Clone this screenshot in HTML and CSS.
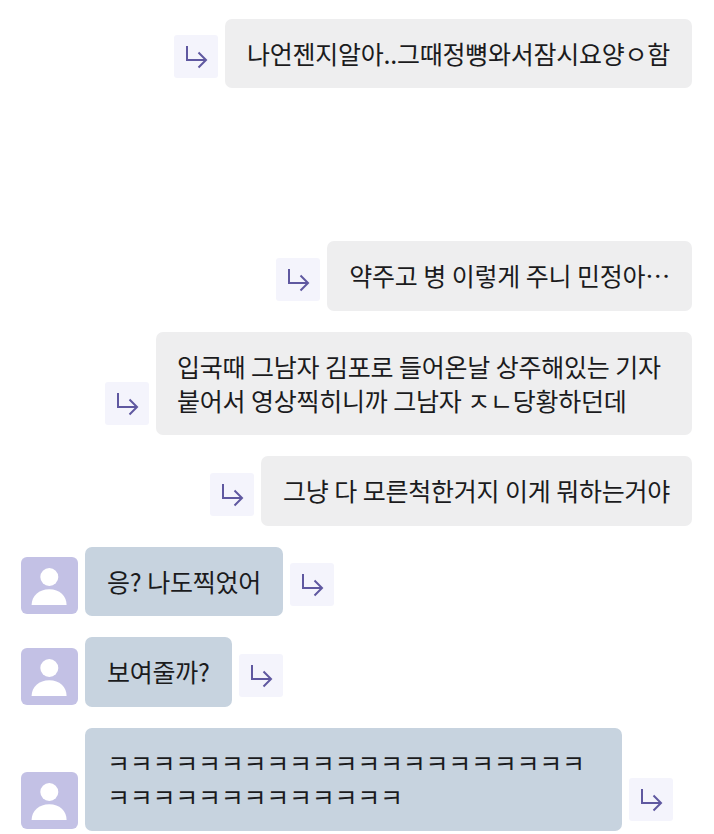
FILE: index.html
```html
<!DOCTYPE html>
<html lang="ko">
<head>
    <meta charset="UTF-8">
    <meta name="viewport" content="width=device-width, initial-scale=1.0">
    <title>Chat</title>
    <link rel="stylesheet" href="styles.css">
</head>
<body>
    <svg class="defs" width="0" height="0">
        <symbol id="reply" viewBox="0 0 44 43">
            <path d="M13 11V25H32M24.500 17.500L32 25L24.500 32.500" fill="none" stroke="currentColor" stroke-width="2"/>
        </symbol>
        <symbol id="person" viewBox="0 0 57 57">
            <circle cx="28.300" cy="20" r="9"/>
            <path d="M10.600 48C10.600 39 18 32.300 28.300 32.300S45.600 39 45.600 48Z"/>
        </symbol>
    </svg>

    <div class="chat">
        <div class="row mine first">
            <span class="reply"><svg><use href="#reply"/></svg></span>
            <div class="bubble">나언젠지알아..그때정뼝와서잠시요양ㅇ함</div>
        </div>
        <div class="row mine gap-big">
            <span class="reply"><svg><use href="#reply"/></svg></span>
            <div class="bubble">약주고 병 이렇게 주니 민정아…</div>
        </div>
        <div class="row mine">
            <span class="reply"><svg><use href="#reply"/></svg></span>
            <div class="bubble wide-a">입국때 그남자 김포로 들어온날 상주해있는 기자<br>붙어서 영상찍히니까 그남자 ㅈㄴ당황하던데</div>
        </div>
        <div class="row mine">
            <span class="reply"><svg><use href="#reply"/></svg></span>
            <div class="bubble">그냥 다 모른척한거지 이게 뭐하는거야</div>
        </div>
        <div class="row theirs">
            <span class="avatar"><svg><use href="#person"/></svg></span>
            <div class="bubble">응? 나도찍었어</div>
            <span class="reply"><svg><use href="#reply"/></svg></span>
        </div>
        <div class="row theirs">
            <span class="avatar"><svg><use href="#person"/></svg></span>
            <div class="bubble">보여줄까?</div>
            <span class="reply"><svg><use href="#reply"/></svg></span>
        </div>
        <div class="row theirs">
            <span class="avatar"><svg><use href="#person"/></svg></span>
            <div class="bubble wide-b">ㅋㅋㅋㅋㅋㅋㅋㅋㅋㅋㅋㅋㅋㅋㅋㅋㅋㅋㅋㅋㅋ<br>ㅋㅋㅋㅋㅋㅋㅋㅋㅋㅋㅋㅋㅋ</div>
            <span class="reply"><svg><use href="#reply"/></svg></span>
        </div>
    </div>
</body>
</html>
```

FILE: styles.css
```css
body {
    margin: 0;
    background-color: #fff;
    color: #1b1b1d;
    font-family: "Noto Sans CJK KR", "Noto Sans", sans-serif;
}
.defs {
    position: absolute;
}
.chat {
    display: flex;
    flex-direction: column;
    gap: 21px;
    padding: 18.500px 22px 0 21px;
}
.row {
    display: flex;
    align-items: flex-end;
    gap: 7px;
}
.mine {
    justify-content: flex-end;
}
.gap-big {
    margin-top: 132px;
}
.bubble {
    padding: 17px 22px 18.500px;
    border-radius: 7px;
    font-size: 25px;
    line-height: 34px;
    letter-spacing: -0.250px;
    word-spacing: -1px;
    white-space: nowrap;
}
.mine .bubble {
    background-color: #eeeeef;
}
.theirs .bubble {
    background-color: #c7d3df;
}
.wide-a {
    width: 493px;
    padding-left: 21px;
}
.wide-b {
    width: 493px;
}
.reply {
    width: 44px;
    height: 43px;
    margin-bottom: 10px;
    border-radius: 3px;
    background-color: #f4f4fc;
    color: #5f58a0;
}
.reply svg {
    display: block;
    width: 44px;
    height: 43px;
}
.avatar {
    width: 57px;
    height: 57px;
    margin-bottom: 2px;
    border-radius: 6px;
    background-color: #c3c1e5;
}
.avatar svg {
    display: block;
    width: 57px;
    height: 57px;
    fill: #fff;
}
```
